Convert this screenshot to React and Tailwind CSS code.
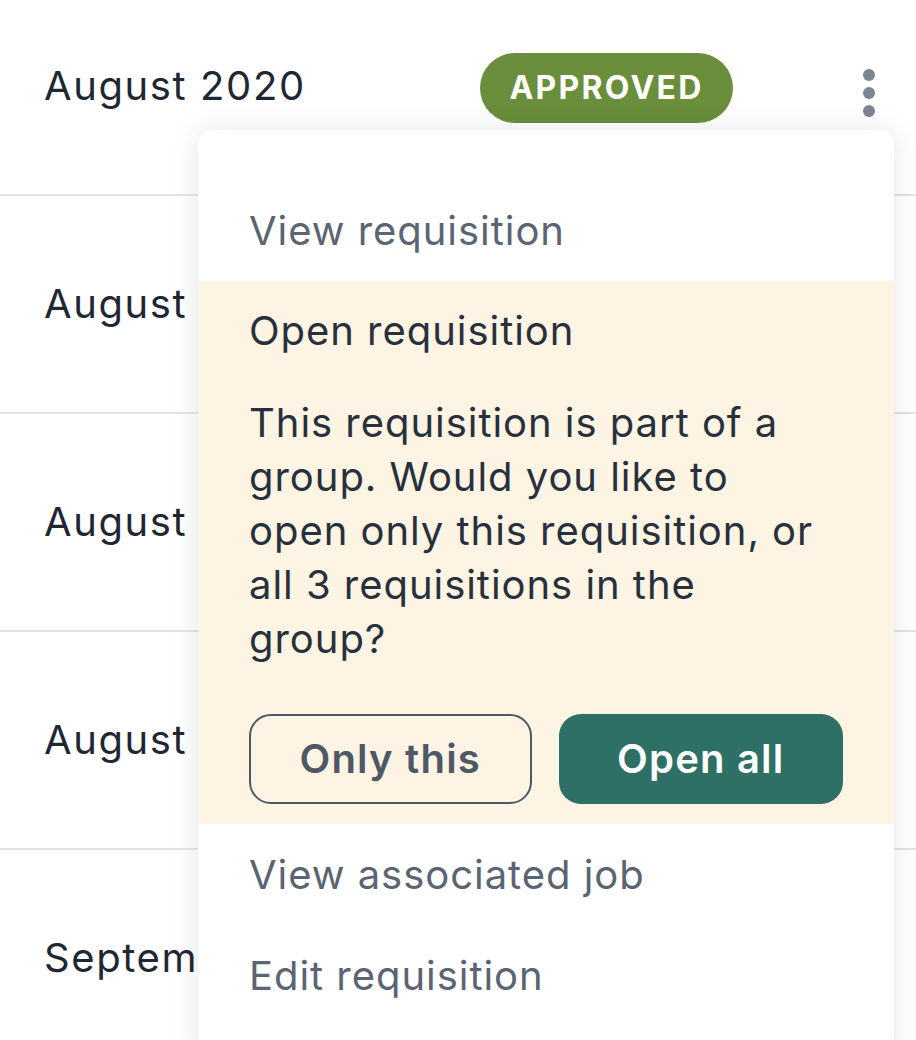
import React from "react";

function Row({ label, children }) {
  return (
    <div className="relative flex h-[218px] items-center border-b-2 border-[#e1e4ea] pl-[44px]">
      <span className="text-[40px] tracking-[0.04em] text-[#1f2733]">{label}</span>
      {children}
    </div>
  );
}

export default function App() {
  return (
    <div
      className="relative h-[1040px] w-[916px] overflow-hidden bg-white"
      style={{ fontFamily: "Inter, 'Noto Sans', sans-serif" }}
    >
      <div className="-mt-[22px]">
        <Row label="August 2020">
          <span className="absolute left-[480px] top-[75px] flex h-[70px] w-[253px] items-center justify-center rounded-full bg-[#6a8e3b] text-[32px] font-bold tracking-[0.07em] text-white">
            APPROVED
          </span>
          <span className="absolute left-[863px] top-[91px] flex flex-col gap-[6px]">
            <span className="block h-[12px] w-[12px] rounded-full bg-[#7c8593]" />
            <span className="block h-[12px] w-[12px] rounded-full bg-[#7c8593]" />
            <span className="block h-[12px] w-[12px] rounded-full bg-[#7c8593]" />
          </span>
        </Row>
        <Row label="August 2020" />
        <Row label="August 2020" />
        <Row label="August 2020" />
        <Row label="September 2020" />
      </div>

      <div className="absolute left-[198px] top-[130px] w-[696px] rounded-[14px] bg-white pb-[40px] pt-[50px] tracking-[0.06em] shadow-[0_0_28px_rgba(30,40,60,0.12)]">
        <div className="flex h-[101px] items-center px-[51px] text-[40px] text-[#5b6472]">
          View requisition
        </div>
        <div className="bg-[#fdf4e3] px-[51px] pb-[20px] pt-[23px] text-[#28303c]">
          <div className="text-[40px] leading-[54px]">Open requisition</div>
          <p className="mt-[38px] max-w-[590px] text-[40px] leading-[54px]">
            This requisition is part of a group. Would you like to open only this
            requisition, or all 3 requisitions in the group?
          </p>
          <div className="mt-[48px] flex gap-[27px]">
            <button className="flex h-[90px] w-[283px] items-center justify-center rounded-[22px] border-2 border-[#4e5866] text-[40px] font-semibold tracking-[0.03em] text-[#4e5866]">
              Only this
            </button>
            <button className="flex h-[90px] w-[285px] items-center justify-center rounded-[22px] bg-[#2e7065] text-[40px] font-semibold tracking-[0.03em] text-white">
              Open all
            </button>
          </div>
        </div>
        <div className="flex h-[101px] items-center px-[51px] text-[40px] text-[#5b6472]">
          View associated job
        </div>
        <div className="flex h-[101px] items-center px-[51px] text-[40px] text-[#5b6472]">
          Edit requisition
        </div>
      </div>
    </div>
  );
}
